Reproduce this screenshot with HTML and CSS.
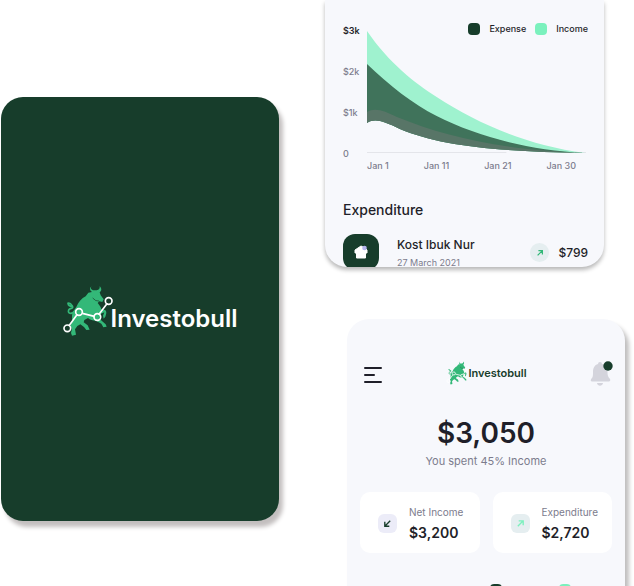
FILE: index.html
```
<!DOCTYPE html>
<html lang="en">
<head>
<meta charset="utf-8">
<meta name="viewport" content="width=device-width, initial-scale=1">
<title>Investobull</title>
<link rel="stylesheet" href="styles.css">
</head>
<body>
<svg class="sprite" aria-hidden="true">
  <symbol id="bull" viewBox="20 16 156 156">
    <path fill="#33b878" d="M108 20C105 26 107 30 113 32L124 32C131 31 134 27 133 20C140 27 139 34 133 38L136 47L145 59L141 67L132 65L127 70C133 77 137 83 138 89L149 91C155 95 153 103 150 111L145 117L143 108L147 98L137 102L132 115L139 123L151 134L154 141L144 143L138 132L122 123C112 123 104 121 98 115L87 121L85 128L97 137L103 150L93 151L86 142L75 134L66 139L59 149L62 165L50 168L47 160L50 147L45 138L50 126L50 107C51 98 56 91 63 82C69 68 79 56 91 50L99 39L110 37C103 33 102 26 108 20Z"/>
    <path fill="none" stroke="#33b878" stroke-width="5" stroke-linecap="round" d="M58 94C48 106 36 101 40 91C44 84 56 88 51 79C47 73 41 70 38 71C39 78 44 80 50 80"/>
    <path class="crease" d="M112 55Q121 66 131 64"/>
    <g fill="none" stroke="#fff" stroke-width="5"><path d="M41 138L66 104M81 101L117 110M130 105L156 71"/><circle cx="36" cy="146" r="10"/><circle cx="71" cy="97" r="10"/><circle cx="126" cy="112" r="10"/><circle cx="160" cy="64" r="10"/></g>
  </symbol>
</svg>
<main class="board">
  <section class="splash">
    <div class="brand brand-large"><svg class="bull"><use href="#bull"/></svg><span>Investobull</span></div>
  </section>
  <div class="screens">
    <section class="screen report">
      <div class="chart">
        <div class="y-axis"><strong>$3k</strong><span>$2k</span><span>$1k</span><span>0</span></div>
        <svg class="plot" viewBox="0 0 220 135" preserveAspectRatio="none" role="img" aria-label="Expense and income in January">
          <path stroke="#e4e5ea" d="M0 127.500H220"/>
          <path fill="#9ff2cf" d="M0 6C22 38 48 58 70 72C110 98 160 120 219 128L0 128V98Z"/>
          <path fill="#f7f8fc" d="M0 98C8 93 16 96 33 104C75 121 125 126 219 128V129H0Z"/>
          <path fill="#40735b" d="M0 39C22 60 46 79 70 91C110 111 160 125 219 128C125 126 75 121 33 104C16 96 8 93 0 98Z"/>
          <path fill="#587567" d="M0 87C8 82 18 86 30 92C80 112 135 125 219 128C125 126 75 121 33 104C16 96 8 93 0 98Z"/>
          <path stroke="#e4e5ea" d="M0 127.500H140"/>
        </svg>
        <div class="legend"><span class="key expense"></span><span>Expense</span><span class="key income"></span><span>Income</span></div>
        <div class="x-axis"><span>Jan 1</span><span>Jan 11</span><span>Jan 21</span><span>Jan 30</span></div>
      </div>
      <h2>Expenditure</h2>
      <div class="entry">
        <div class="tile"><svg viewBox="0 0 16 16" width="16" height="16"><path fill="#fff" stroke="#fff" stroke-width="1" stroke-linejoin="round" d="M8 2L2 6v3h1.500v5h9V9H14V6l-2-2z"/><circle cx="11.500" cy="4" r="2.300" fill="#b5b4ee"/></svg></div>
        <div class="details"><b>Kost Ibuk Nur</b><span>27 March 2021</span></div>
        <div class="arrow round"><svg viewBox="0 0 10 10" width="8" height="8"><path d="M2 8L8 2M3 2h5v5"/></svg></div>
        <b class="amount">$799</b>
      </div>
    </section>
    <section class="screen overview">
      <header>
        <button class="menu" aria-label="Menu"><svg viewBox="0 0 20 18" width="20" height="18"><path stroke="#1f1f29" stroke-width="2" stroke-linecap="round" d="M2 2h16M2 9h9M2 16h16"/></svg></button>
        <div class="brand brand-small"><svg class="bull"><use href="#bull"/></svg><span>Investobull</span></div>
        <button class="bell" aria-label="Notifications"><svg viewBox="0 0 24 26" width="24" height="26"><path fill="#d4d4dc" d="M8 3a2 2 0 0 1 4 0c4 1 5.500 4 5.500 8 0 4 1 5 2.500 7 .7 1.500 0 2.500-1 2.500H2c-1.200 0-1.700-1-.8-2.500C3 16 3 15 3 11c0-4 1.500-7 5-8zM7 22h6c-.5 3.500-5.500 3.500-6 0z"/><circle cx="18" cy="5" r="4.700" fill="#173d2b"/></svg></button>
      </header>
      <h1>$3,050</h1>
      <p class="spent">You spent 45% Income</p>
      <div class="stats">
        <div class="stat"><div class="arrow in"><svg viewBox="0 0 10 10" width="9" height="9"><path d="M8 2L2 8M2 3v5h5"/></svg></div><div><span>Net Income</span><b>$3,200</b></div></div>
        <div class="stat"><div class="arrow out"><svg viewBox="0 0 10 10" width="9" height="9"><path d="M2 8L8 2M3 2h5v5"/></svg></div><div><span>Expenditure</span><b>$2,720</b></div></div>
      </div>
      <div class="next-keys"><span class="key expense"></span><span class="key income"></span></div>
    </section>
  </div>
</main>
</body>
</html>
```
FILE: styles.css
```
* { box-sizing: border-box; }
body { margin: 0; background: #fff; color: #1f1f29; font-family: Inter, "Open Sans", sans-serif; }
h1, h2, p { margin: 0; }
button { padding: 0; border: 0; background: none; }
svg { display: block; flex-shrink: 0; }
.sprite { position: absolute; width: 0; height: 0; }
.crease { fill: none; stroke: #173d2b; stroke-width: 2; }
.board { display: grid; grid-template-columns: 278fr 309fr; column-gap: 46px; align-items: start; height: 100vh; padding-left: 1px; overflow: hidden; }
.splash { display: flex; align-items: center; justify-content: center; min-height: 424px; margin-top: 97px; padding: 4px 0 0 20px; border-radius: 22px; background: #173d2b; box-shadow: 4px 6px 4px #c3bfbf; }
.brand { display: flex; align-items: center; font-weight: 600; }
.brand-large { color: #fff; font-size: 24px; line-height: 32px; }
.brand-large .bull { width: 52px; height: 52px; margin-right: -4px; }
.brand-large span { padding-top: 16px; }
.brand-small { color: #173d2b; font-size: 11px; line-height: 14px; }
.brand-small .bull { width: 24px; height: 26px; margin-right: -2px; }
.screen { background: #f7f8fc; }
.report { height: 267px; margin-right: 30px; padding: 25px 16px 0 18px; border-radius: 0 0 22px 22px; box-shadow: 0 3px 4px #b9b9b9; overflow: hidden; }
.chart { display: grid; grid-template-columns: 24px 1fr; grid-template-rows: 135px 12px; color: #7c7c8d; font-size: 9px; font-weight: 500; line-height: 12px; }
.y-axis { display: flex; flex-direction: column; justify-content: space-between; }
.y-axis strong { color: #1f1f29; font-weight: 600; }
.plot { grid-area: 1 / 2; width: 100%; height: 135px; padding-right: 2px; }
.legend { display: flex; align-items: center; gap: 9px; color: #1f1f29; font-size: 9px; font-weight: 500; line-height: 12px; }
.chart .legend { grid-area: 1 / 2; align-self: start; justify-self: end; margin-top: -2px; }
.key { width: 12px; height: 12px; border-radius: 4px; }
.expense { background: #173d2b; }
.income { background: #7bf1bd; }
.x-axis { grid-area: 2 / 2; display: flex; justify-content: space-between; padding-right: 12px; }
h2 { margin-top: 28px; font-size: 14px; font-weight: 500; line-height: 20px; }
.entry { display: flex; align-items: flex-start; margin-top: 14px; }
.tile { display: grid; place-items: center; width: 36px; height: 36px; border-radius: 12px; background: #173d2b; }
.details { flex: 1; display: flex; flex-direction: column; margin-left: 18px; }
.details b { font-size: 12px; font-weight: 500; line-height: 22px; }
.details span { color: #7c7c8d; font-size: 9px; line-height: 14px; }
.arrow { display: grid; place-items: center; width: 19px; height: 19px; border-radius: 6px; background: #e5eef0; }
.arrow path { fill: none; stroke: #33b878; stroke-width: 1.5; }
.round { margin-top: 9px; border-radius: 50%; }
.amount { margin: 9px 0 0 9px; font-size: 12px; font-weight: 500; line-height: 20px; }
.overview { margin: 52px 9px 0 22px; padding: 40px 13px; border-radius: 22px 22px 0 0; box-shadow: 4px 5px 4px #c0bfbf; }
.overview header { display: flex; align-items: center; justify-content: space-between; padding-left: 3px; margin-right: -2px; }
.menu { padding-top: 4px; }
.bell { padding-top: 2px; }
h1 { margin-top: 28px; font-size: 28px; font-weight: 600; line-height: 36px; text-align: center; }
.spent { color: #7c7c8d; font-size: 11px; line-height: 20px; text-align: center; }
.stats { display: grid; grid-template-columns: 1fr 1fr; gap: 13px; margin-top: 21px; }
.stat { display: flex; align-items: center; gap: 12px; height: 61px; padding: 2px 0 0 18px; border-radius: 10px; background: #fff; }
.stat span, .stat b { display: block; white-space: nowrap; }
.stat span { color: #7c7c8d; font-size: 10px; line-height: 18px; }
.stat b { font-size: 14px; font-weight: 600; line-height: 24px; }
.in { background: #ececf8; }
.in path { stroke: #173d2b; }
.out path { stroke: #7bf1bd; }
.next-keys { display: flex; justify-content: flex-end; gap: 57px; margin-top: 31px; padding-right: 41px; }
```
